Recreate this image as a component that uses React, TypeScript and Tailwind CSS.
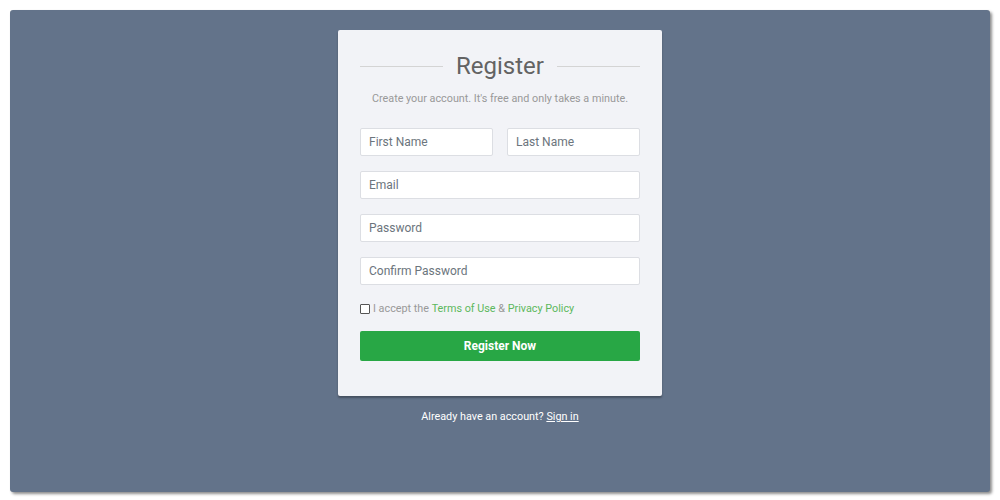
import React from "react";

function Field(props: { placeholder: string; type?: string }) {
	return (
		<input
			type={props.type || "text"}
			placeholder={props.placeholder}
			className="w-full h-[28px] px-[8px] bg-white border border-[#dcdee3] rounded-[2px] text-[12px] text-[#495057] placeholder:text-[#6c757d] outline-none"
		/>
	);
}

function App() {
	return (
		<div className="w-[1000px] h-[500px] bg-white p-[10px] font-['Roboto',sans-serif]">
			<div className="w-[980px] h-[482px] bg-[#63738a] rounded-[3px] shadow-[2px_2px_3px_rgba(0,0,0,0.45)] pt-[20px]">
				<div className="w-[324px] mx-auto bg-[#f2f3f7] rounded-[2px] shadow-[0_2px_2px_rgba(0,0,0,0.3)] px-[22px] pt-[21px] pb-[35px]">
					{/* heading with side lines */}
					<div className="flex items-center justify-between h-[30px]">
						<div className="w-[83px] h-[1px] bg-[#d4d4d4]" />
						<h2 className="text-[24px] leading-[30px] text-[#636363]">Register</h2>
						<div className="w-[83px] h-[1px] bg-[#d4d4d4]" />
					</div>
					<p className="mt-[10px] text-center text-[10.8px] leading-[16px] text-[#999]">
						Create your account. It's free and only takes a minute.
					</p>

					<div className="mt-[21px] flex flex-col gap-[15px]">
						<div className="flex gap-[14px]">
							<Field placeholder="First Name" />
							<Field placeholder="Last Name" />
						</div>
						<Field placeholder="Email" type="email" />
						<Field placeholder="Password" type="password" />
						<Field placeholder="Confirm Password" type="password" />
					</div>

					<label className="mt-[16px] flex items-center h-[16px] text-[10.8px] text-[#999]">
						<span className="w-[10px] h-[10px] border border-[#555] rounded-[1px] bg-white mr-[3px]" />
						I accept the&nbsp;<a className="text-[#5cb85c]">Terms of Use</a>&nbsp;&amp;&nbsp;
						<a className="text-[#5cb85c]">Privacy Policy</a>
					</label>

					<button
						type="submit"
						className="mt-[14px] w-full h-[30px] bg-[#28a745] rounded-[2px] text-white text-[12px] font-bold"
					>
						Register Now
					</button>
				</div>

				<p className="mt-[13px] text-center text-[10.8px] leading-[16px] text-white">
					Already have an account? <a className="underline">Sign in</a>
				</p>
			</div>
		</div>
	);
}

export default App;
